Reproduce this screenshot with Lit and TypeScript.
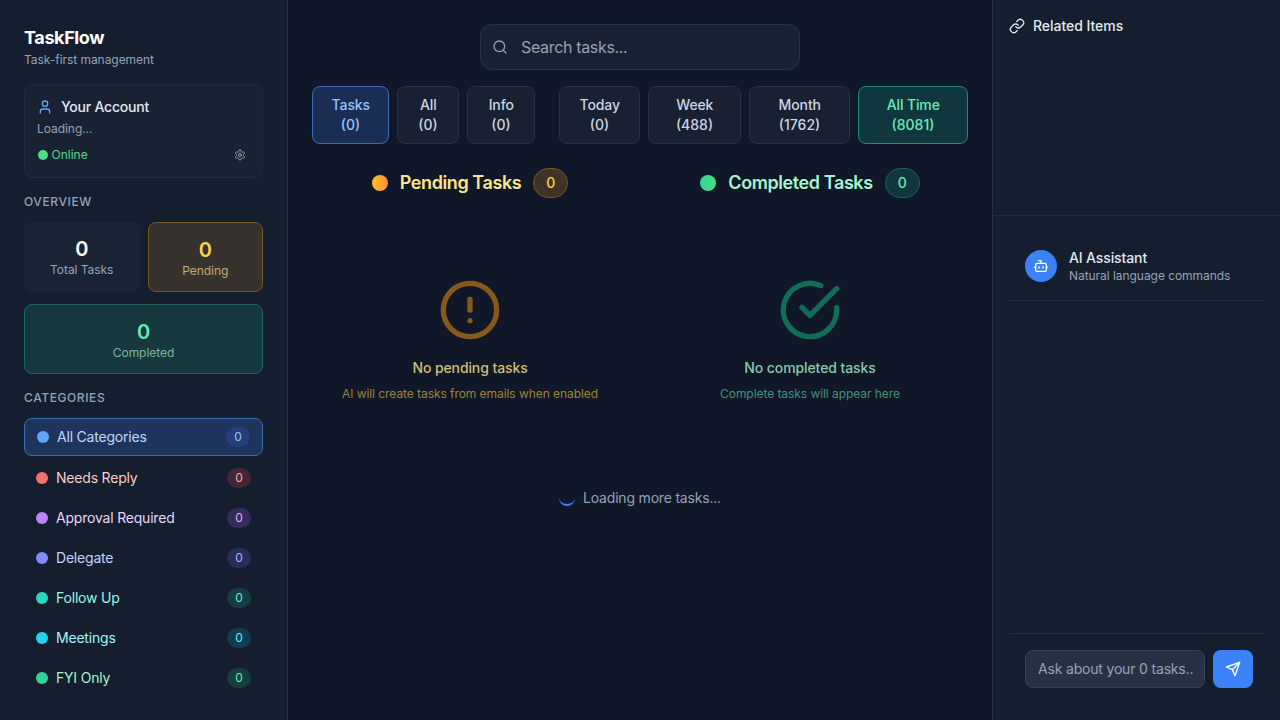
import { LitElement, html, css, svg } from "lit";
import { customElement, property } from "lit/decorators.js";
import { classMap } from "lit/directives/class-map.js";

const ICONS: Record<string, unknown> = {
  user: svg`<path d="M19 21v-2a4 4 0 0 0-4-4H9a4 4 0 0 0-4 4v2"/><circle cx="12" cy="7" r="4"/>`,
  gear: svg`<path d="M12.22 2h-.44a2 2 0 0 0-2 2v.18a2 2 0 0 1-1 1.73l-.43.25a2 2 0 0 1-2 0l-.15-.08a2 2 0 0 0-2.73.73l-.22.38a2 2 0 0 0 .73 2.73l.15.1a2 2 0 0 1 1 1.72v.51a2 2 0 0 1-1 1.74l-.15.09a2 2 0 0 0-.73 2.73l.22.38a2 2 0 0 0 2.73.73l.15-.08a2 2 0 0 1 2 0l.43.25a2 2 0 0 1 1 1.73V20a2 2 0 0 0 2 2h.44a2 2 0 0 0 2-2v-.18a2 2 0 0 1 1-1.73l.43-.25a2 2 0 0 1 2 0l.15.08a2 2 0 0 0 2.73-.73l.22-.39a2 2 0 0 0-.73-2.73l-.15-.08a2 2 0 0 1-1-1.74v-.5a2 2 0 0 1 1-1.74l.15-.09a2 2 0 0 0 .73-2.73l-.22-.38a2 2 0 0 0-2.73-.73l-.15.08a2 2 0 0 1-2 0l-.43-.25a2 2 0 0 1-1-1.73V4a2 2 0 0 0-2-2z"/><circle cx="12" cy="12" r="3"/>`,
  search: svg`<circle cx="11" cy="11" r="8"/><path d="m21 21-4.3-4.3"/>`,
  alert: svg`<circle cx="12" cy="12" r="10"/><path d="M12 8v4"/><path d="M12 16h.01"/>`,
  check: svg`<path d="M22 11.08V12a10 10 0 1 1-5.93-9.14"/><path d="m9 11 3 3L22 4"/>`,
  link: svg`<path d="M10 13a5 5 0 0 0 7.54.54l3-3a5 5 0 0 0-7.07-7.07l-1.72 1.71"/><path d="M14 11a5 5 0 0 0-7.54-.54l-3 3a5 5 0 0 0 7.07 7.07l1.71-1.71"/>`,
  bot: svg`<path d="M12 8V4H8"/><rect width="16" height="12" x="4" y="8" rx="2"/><path d="M2 14h2"/><path d="M20 14h2"/><path d="M15 13v2"/><path d="M9 13v2"/>`,
  send: svg`<path d="m22 2-7 20-4-9-9-4Z"/><path d="M22 2 11 13"/>`,
};

@customElement("ui-icon")
export class UiIcon extends LitElement {
  @property() name = "";
  static styles = css`
    :host { display: block; width: 16px; height: 16px; flex: none; }
    .glyph { display: block; width: 100%; height: 100%; fill: none; stroke: currentColor; stroke-width: 2; stroke-linecap: round; stroke-linejoin: round; }
  `;
  render() {
    return html`<svg class="glyph" viewBox="0 0 24 24">${ICONS[this.name]}</svg>`;
  }
}

@customElement("app-root")
export class AppRoot extends LitElement {
  private categories = [
    { label: "All Categories", tone: "blue" },
    { label: "Needs Reply", tone: "red" },
    { label: "Approval Required", tone: "purple" },
    { label: "Delegate", tone: "indigo" },
    { label: "Follow Up", tone: "teal" },
    { label: "Meetings", tone: "cyan" },
    { label: "FYI Only", tone: "emerald" },
  ];

  private kinds = [
    { label: "Tasks", count: 0, active: true },
    { label: "All", count: 0 },
    { label: "Info", count: 0 },
  ];

  private ranges = [
    { label: "Today", count: 0 },
    { label: "Week", count: 488 },
    { label: "Month", count: 1762 },
    { label: "All Time", count: 8081, active: true },
  ];

  static styles = css`
    :host {
      display: grid; grid-template-columns: 288px 704px 288px; width: 1280px; height: 720px; overflow: hidden;
      font-family: Inter, "Liberation Sans", sans-serif; font-size: 14px; line-height: 20px; color: #e2e8f0; background: #101728;
    }
    * { box-sizing: border-box; }

    .sidebar { background: #151e2f; border-right: 1px solid #273244; padding: 24px; }
    .brand { font-size: 18px; line-height: 28px; font-weight: 700; letter-spacing: -0.38px; color: #fff; }
    .tagline { font-size: 12px; line-height: 16px; letter-spacing: -0.05px; color: #94a3b8; }
    .account { margin-top: 16px; height: 94px; padding: 12px; border: 1px solid #1f2b3b; border-radius: 8px; background: #192233; }
    .account-head { display: flex; align-items: center; gap: 8px; font-weight: 500; letter-spacing: -0.22px; }
    .account-head ui-icon { color: #60a5fa; }
    .account-state { margin-top: 4px; font-size: 12px; line-height: 16px; letter-spacing: -0.05px; color: #94a3b8; }
    .account-foot { display: flex; align-items: center; justify-content: space-between; margin-top: 6px; height: 24px; padding-right: 4px; font-size: 12px; line-height: 16px; color: #4ade80; }
    .online { display: flex; align-items: center; gap: 4px; padding-left: 0.5px; }
    .online-dot { width: 10px; height: 10px; border-radius: 50%; background: #4ade80; }
    .account-foot ui-icon { width: 12px; height: 12px; color: #94a3b8; }

    .section-title { font-size: 12px; line-height: 16px; font-weight: 500; letter-spacing: 0.6px; color: #94a3b8; text-transform: uppercase; }
    .overview-title { margin-top: 16px; }
    .categories-title { margin-top: 16px; }
    .stats { display: grid; grid-template-columns: 1fr 1fr; column-gap: 8px; row-gap: 12px; margin-top: 12px; }
    .stat { height: 70px; border-radius: 8px; padding: 12px; text-align: center; background: #1a2334; }
    .stat-value { font-size: 20px; line-height: 30px; height: 28px; font-weight: 600; color: #fff; }
    .stat-label { font-size: 12px; line-height: 16px; letter-spacing: -0.05px; color: #94a3b8; }
    .stat.pending { border: 1px solid #775a20; background: #38322e; }
    .stat.pending .stat-value { color: #fcd34d; }
    .stat.pending .stat-label { color: #c2ad6d; }
    .stat.done { grid-column: 1 / -1; border: 1px solid #1a6a5a; background: #16383f; }
    .stat.done .stat-value { color: #6ee7b7; }
    .stat.done .stat-label { color: #79b8a1; }

    .categories { display: flex; flex-direction: column; gap: 4px; margin-top: 12px; letter-spacing: -0.2px; }
    .category { display: flex; align-items: center; gap: 8px; height: 36px; padding: 0 12px; border-radius: 8px; }
    .category.selected { height: 38px; border: 1px solid #3b6db5; background: #1f345c; }
    .category-dot { width: 12px; height: 12px; border-radius: 50%; }
    .category-name { flex: 1; }
    .count { width: 24px; height: 20px; border-radius: 10px; text-align: center; font-size: 12px; line-height: 20px; letter-spacing: 0; }
    .blue .category-name { color: #bfdbfe; } .blue .category-dot { background: #60a5fa; } .blue .count { background: #23407a; color: #93c5fd; }
    .red .category-name { color: #fecaca; } .red .category-dot { background: #f87171; } .red .count { background: #422735; color: #fca5a5; }
    .purple .category-name { color: #e9d5ff; } .purple .category-dot { background: #c084fc; } .purple .count { background: #362a59; color: #d8b4fe; }
    .indigo .category-name { color: #c7d2fe; } .indigo .category-dot { background: #818cf8; } .indigo .count { background: #262d59; color: #a5b4fc; }
    .teal .category-name { color: #99f6e4; } .teal .category-dot { background: #2dd4bf; } .teal .count { background: #163d47; color: #5eead4; }
    .cyan .category-name { color: #a5f3fc; } .cyan .category-dot { background: #22d3ee; } .cyan .count { background: #133c53; color: #67e8f9; }
    .emerald .category-name { color: #a7f3d0; } .emerald .category-dot { background: #34d399; } .emerald .count { background: #163d40; color: #6ee7b7; }

    .main { display: flex; flex-direction: column; padding: 24px; }
    .search { display: flex; align-items: center; gap: 13px; align-self: center; width: 320px; height: 46px; padding: 0 11px; border: 1px solid #273444; border-radius: 12px; background: #182131; font-size: 16px; line-height: 24px; letter-spacing: -0.34px; color: #94a3b8; }
    .filters { display: flex; justify-content: space-between; margin-top: 16px; }
    .filter-group { display: grid; gap: 8px; }
    .kinds { grid-template-columns: 77px 62px 68px; }
    .ranges { grid-template-columns: 81px 93px 101px 110px; }
    .filter { display: flex; flex-direction: column; align-items: center; height: 58px; padding: 8px 0; border: 1px solid #273242; border-radius: 8px; background: #182031; font-weight: 500; color: #cbd5e1; }
    .filter-label { letter-spacing: -0.12px; padding-left: 0.5px; }
    .kinds .active { border-color: #3b6db5; background: #1a2d53; color: #93c5fd; }
    .ranges .active { border-color: #1e8f70; background: #10373e; color: #6ee7b7; }

    .columns { display: grid; grid-template-columns: 1fr 1fr; gap: 24px; margin-top: 24px; }
    .column { display: flex; flex-direction: column; align-items: center; }
    .column-head { display: flex; align-items: center; gap: 12px; height: 30px; font-size: 18px; line-height: 28px; font-weight: 600; letter-spacing: -0.41px; }
    .column-dot { width: 16px; height: 16px; border-radius: 50%; }
    .badge { width: 35px; height: 30px; border: 1px solid; border-radius: 15px; text-align: center; font-size: 14px; line-height: 28px; font-weight: 500; letter-spacing: 0; }
    .empty-icon { width: 64px; height: 64px; margin-top: 80px; }
    .empty-title { margin-top: 16px; font-weight: 500; letter-spacing: -0.1px; }
    .empty-hint { margin-top: 8px; font-size: 12px; line-height: 16px; letter-spacing: -0.06px; }
    .amber .column-head { color: #fde68a; }
    .amber .column-dot { background: linear-gradient(90deg, #fbbf24, #fb923c); }
    .amber .badge { border-color: #775819; background: #3f3227; color: #fcd34d; }
    .amber .empty-icon { color: #87591a; }
    .amber .empty-title { color: #cfbe78; }
    .amber .empty-hint { color: #99833c; }
    .green .column-head { color: #a7f3d0; }
    .green .column-dot { background: linear-gradient(90deg, #34d399, #4ade80); }
    .green .badge { border-color: #186650; background: #10373c; color: #6ee7b7; }
    .green .empty-icon { color: #106d58; }
    .green .empty-title { color: #8bc9ae; }
    .green .empty-hint { color: #47907a; }
    .loading { display: flex; align-items: center; justify-content: center; gap: 8px; margin-top: 86px; letter-spacing: -0.19px; color: #94a3b8; }
    .spinner { width: 16px; height: 16px; border-radius: 50%; border-bottom: 2px solid #3b82f6; }

    .aside { display: flex; flex-direction: column; background: #151e2f; border-left: 1px solid #273244; }
    .related { height: 216px; padding: 16px; border-bottom: 1px solid #1f2c3d; }
    .related-head { display: flex; align-items: center; gap: 8px; font-weight: 500; letter-spacing: -0.04px; }
    .assistant { display: flex; flex-direction: column; flex: 1; padding: 16px; }
    .assistant-head { display: flex; align-items: center; gap: 12px; height: 69px; padding: 0 16px; border-bottom: 1px solid #222e3f; }
    .avatar { display: grid; place-items: center; width: 32px; height: 32px; border-radius: 50%; background: #3b82f6; color: #fff; }
    .assistant-name { line-height: 20px; font-weight: 500; letter-spacing: -0.12px; }
    .assistant-sub { font-size: 12px; line-height: 16px; letter-spacing: -0.05px; color: #94a3b8; }
    .messages { flex: 1; }
    .composer { display: grid; grid-template-columns: 180px 40px; gap: 8px; height: 71px; padding: 16px 0 0 16px; border-top: 1px solid #222e3f; }
    .ask { height: 38px; padding: 8px 0 8px 12px; border: 1px solid #364354; border-radius: 8px; background: #263244; white-space: nowrap; letter-spacing: -0.18px; color: #94a3b8; }
    .send { display: grid; place-items: center; height: 38px; border-radius: 8px; background: #3b82f6; color: #fff; }
  `;

  private filter(f: { label: string; count: number; active?: boolean }) {
    return html`<div class=${classMap({ filter: true, active: !!f.active })}><span class="filter-label">${f.label}</span><span>(${f.count})</span></div>`;
  }

  private column(tone: string, title: string, icon: string, empty: string, hint: string) {
    return html`<section class="column ${tone}">
      <div class="column-head"><span class="column-dot"></span><span>${title}</span><span class="badge">0</span></div>
      <ui-icon class="empty-icon" name=${icon}></ui-icon>
      <div class="empty-title">${empty}</div>
      <div class="empty-hint">${hint}</div>
    </section>`;
  }

  render() {
    return html`
      <nav class="sidebar">
        <div class="brand">TaskFlow</div>
        <div class="tagline">Task-first management</div>
        <div class="account">
          <div class="account-head"><ui-icon name="user"></ui-icon><span>Your Account</span></div>
          <div class="account-state">Loading...</div>
          <div class="account-foot">
            <span class="online"><span class="online-dot"></span>Online</span>
            <ui-icon name="gear"></ui-icon>
          </div>
        </div>
        <div class="section-title overview-title">Overview</div>
        <div class="stats">
          <div class="stat"><div class="stat-value">0</div><div class="stat-label">Total Tasks</div></div>
          <div class="stat pending"><div class="stat-value">0</div><div class="stat-label">Pending</div></div>
          <div class="stat done"><div class="stat-value">0</div><div class="stat-label">Completed</div></div>
        </div>
        <div class="section-title categories-title">Categories</div>
        <div class="categories">
          ${this.categories.map((c, i) => html`<div class="category ${c.tone} ${i === 0 ? "selected" : ""}">
            <span class="category-dot"></span><span class="category-name">${c.label}</span><span class="count">0</span>
          </div>`)}
        </div>
      </nav>
      <main class="main">
        <div class="search"><ui-icon name="search"></ui-icon><span>Search tasks...</span></div>
        <div class="filters">
          <div class="filter-group kinds">${this.kinds.map((f) => this.filter(f))}</div>
          <div class="filter-group ranges">${this.ranges.map((f) => this.filter(f))}</div>
        </div>
        <div class="columns">
          ${this.column("amber", "Pending Tasks", "alert", "No pending tasks", "AI will create tasks from emails when enabled")}
          ${this.column("green", "Completed Tasks", "check", "No completed tasks", "Complete tasks will appear here")}
        </div>
        <div class="loading"><span class="spinner"></span><span>Loading more tasks...</span></div>
      </main>
      <aside class="aside">
        <section class="related">
          <div class="related-head"><ui-icon name="link"></ui-icon><span>Related Items</span></div>
        </section>
        <section class="assistant">
          <div class="assistant-head">
            <span class="avatar"><ui-icon name="bot"></ui-icon></span>
            <div><div class="assistant-name">AI Assistant</div><div class="assistant-sub">Natural language commands</div></div>
          </div>
          <div class="messages"></div>
          <div class="composer">
            <div class="ask">Ask about your 0 tasks..</div>
            <div class="send"><ui-icon name="send"></ui-icon></div>
          </div>
        </section>
      </aside>
    `;
  }
}
